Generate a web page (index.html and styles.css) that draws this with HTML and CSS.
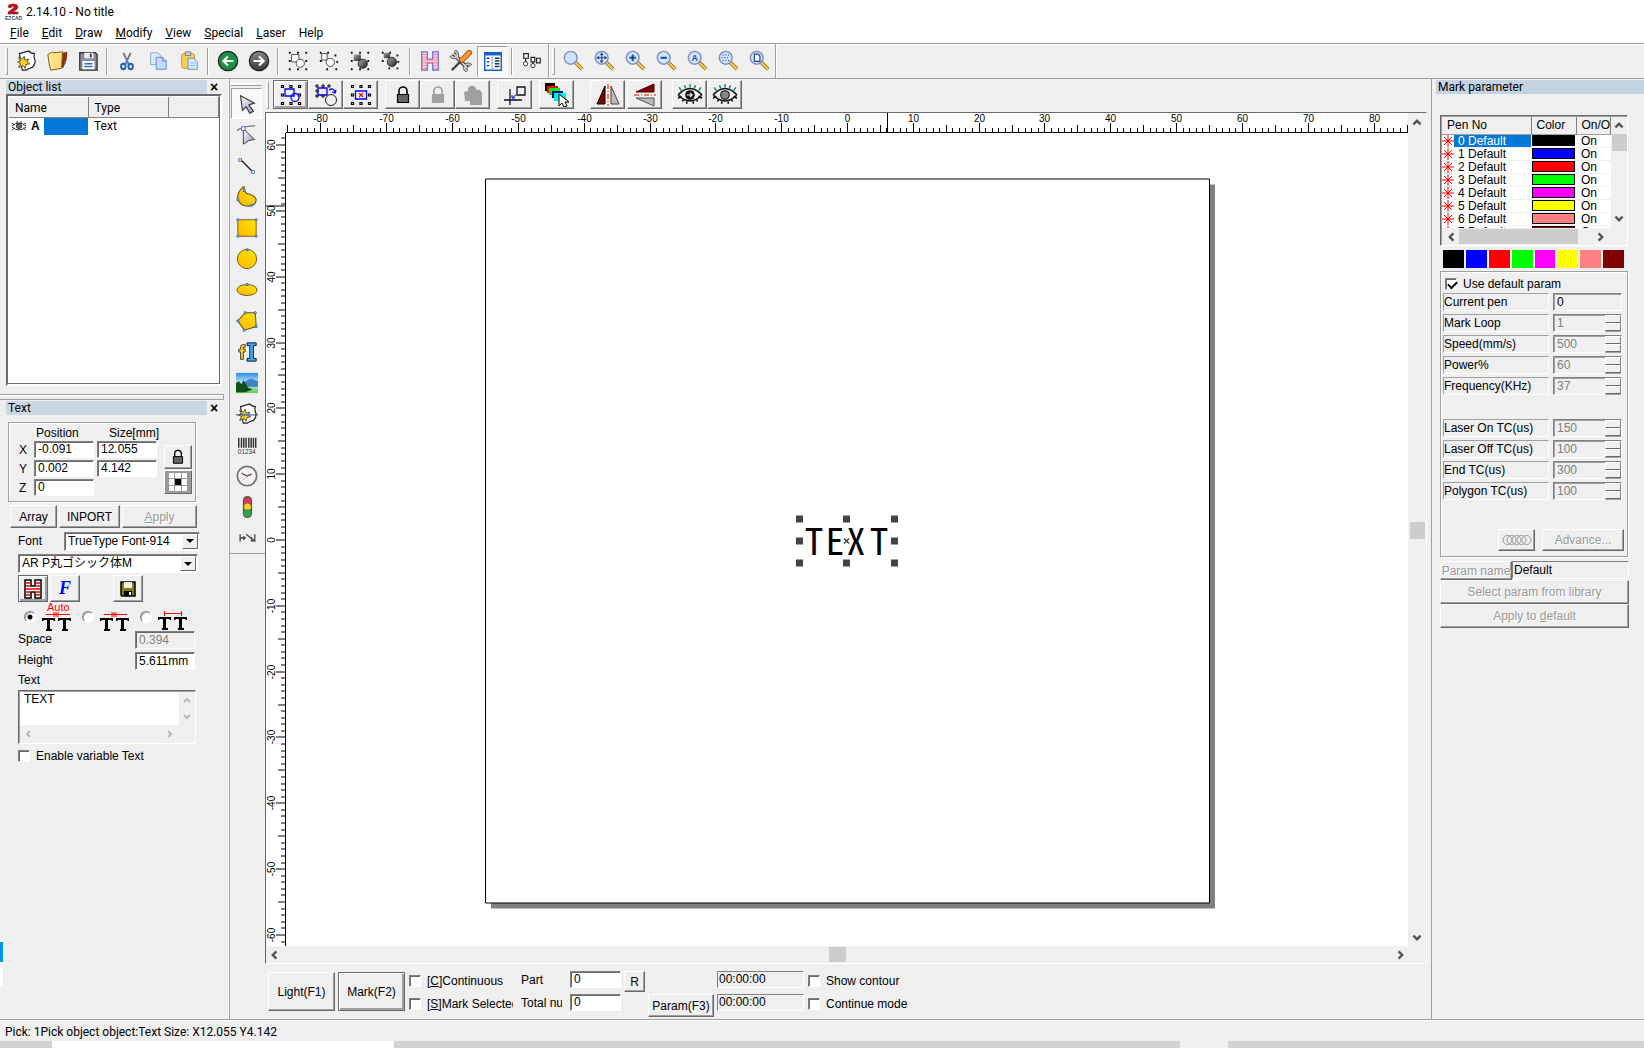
FILE: index.html
```html
<!DOCTYPE html>
<html lang="en">
<head>
<meta charset="utf-8">
<title>2.14.10 - No title</title>
<link rel="stylesheet" href="styles.css">
</head>
<body>
<svg class="defs" aria-hidden="true">
  <defs>
    <linearGradient id="gold" x1="0" y1="1" x2="1" y2="0"><stop offset="0" stop-color="#ffb400"/><stop offset="1" stop-color="#ffe600"/></linearGradient>
    <linearGradient id="steel" x1="0" y1="0" x2="1" y2="1"><stop offset="0" stop-color="#fff"/><stop offset="1" stop-color="#8c93b8"/></linearGradient>
    <linearGradient id="ball" x1="0" y1="0" x2="1" y2="1"><stop offset="0" stop-color="#aaa"/><stop offset="1" stop-color="#222"/></linearGradient>
    <linearGradient id="sky" x1="0" y1="0" x2="0" y2="1"><stop offset="0" stop-color="#2f8be8"/><stop offset=".5" stop-color="#bfe6fb"/><stop offset="1" stop-color="#6cc84a"/></linearGradient>
    <linearGradient id="disc" x1="0" y1="0" x2="0" y2="1"><stop offset="0" stop-color="#8a8a8a"/><stop offset="1" stop-color="#3a3a3a"/></linearGradient>
    <symbol id="page-star" viewBox="0 0 24 24"><path d="M5 4 15 1q2 3 6 3-1 4 1 8 0 4-3 7-4 1-7 3L8 22 6 12z" fill="#fff" stroke="#222" stroke-width="1.300"/><path d="M4 8l4 2 2-3 1 4 4-1-2 3 3 2-4 1-1 4-2-3-5 2 2-4-3-2 3-1z" fill="#ffd21a" stroke="#222" stroke-width=".8"/></symbol>
    <symbol id="dots" viewBox="0 0 24 24"><path d="M2 2h2v2H2zM11 2h2v2h-2zM20 2h2v2h-2zM2 11h2v2H2zM20 11h2v2h-2zM2 20h2v2H2zM11 20h2v2h-2zM20 20h2v2h-2z" fill="#111"/></symbol>
    <symbol id="hdots" viewBox="0 0 24 24"><path d="M2.500 2.500h2v2h-2zM11 2.500h2v2h-2zM19.500 2.500h2v2h-2zM2.500 11h2v2h-2zM19.500 11h2v2h-2zM2.500 19.500h2v2h-2zM11 19.500h2v2h-2zM19.500 19.500h2v2h-2z" fill="#fff" stroke="#000" stroke-width="1.200"/></symbol>
    <symbol id="lens" viewBox="0 0 24 24"><path d="M14 13l8 8" stroke="#8a6d1a" stroke-width="4"/><path d="M14 13l8 8" stroke="#f3cf55" stroke-width="2.200"/><circle cx="9.500" cy="8.500" r="7" fill="#cfe3fa" stroke="#7d8fc4" stroke-width="1.600"/></symbol>
    <symbol id="lock" viewBox="0 0 24 24"><path d="M8 11V8a4 4 0 0 1 8 0v3" fill="none" stroke="currentColor" stroke-width="1.600"/><path d="M6.500 11.500h11v8h-11z" fill="var(--body, #666)" stroke="currentColor" stroke-width="1.200"/></symbol>
    <symbol id="eye" viewBox="0 0 24 24"><path d="M1 12Q12 0 23 12M1 12q11 11 22 0M1 15l3-2M23 15l-3-2M5 18l1-2M9 20v-2M15 20v-2M19 18l-1-2" fill="none" stroke="#111" stroke-width="1.500"/><path d="M4 8 2 5M8 6 7 3M12 5V2M16 6l1-3M20 8l2-3" stroke="#20807a" stroke-width="1.400"/><circle cx="12" cy="12" r="4.500" fill="#111"/></symbol>
    <symbol id="up" viewBox="0 0 10 10"><path d="M2 7l3-3 3 3" fill="none" stroke="currentColor" stroke-width="2"/></symbol>
    <symbol id="down" viewBox="0 0 10 10"><path d="M2 3l3 3 3-3" fill="none" stroke="currentColor" stroke-width="2"/></symbol>
    <symbol id="left" viewBox="0 0 10 10"><path d="M7 2 4 5l3 3" fill="none" stroke="currentColor" stroke-width="2"/></symbol>
    <symbol id="right" viewBox="0 0 10 10"><path d="M3 2l3 3-3 3" fill="none" stroke="currentColor" stroke-width="2"/></symbol>
    <symbol id="drop" viewBox="0 0 10 10"><path d="M1 3h8L5 7z" fill="#000"/></symbol>
    <symbol id="burst" viewBox="0 0 12 12"><path d="M6 0v12M0 6h12M2 2l8 8M10 2l-8 8" stroke="#f00" stroke-width="1"/></symbol>
    <symbol id="tt" viewBox="0 0 30 16"><path d="M0 3h13v3h-1l-1-1H8v9h2v2H4v-2h1V5H2L1 6H0zM16 3h13v3h-1l-1-1h-3v9h2v2h-6v-2h1V5h-3l-1 1h-1z" fill="#000"/></symbol>
  </defs>
</svg>
<div class="app">
  <header class="titlebar">
    <svg class="logo" viewBox="0 0 18 18"><path d="M4 4q0-3 5-3 5 0 5 3 0 2-5 5h5v2H4V9q6-4 6-5 0-1-1-1t-2 2z" fill="#c1121f" stroke="#611"  stroke-width=".5"/><text x="1" y="17" class="logo-text">EZCAD</text></svg>
    <span>2.14.10 - No title</span>
  </header>
  <nav class="menubar">
    <a href="#"><u>F</u>ile</a><a href="#"><u>E</u>dit</a><a href="#"><u>D</u>raw</a><a href="#"><u>M</u>odify</a><a href="#"><u>V</u>iew</a><a href="#"><u>S</u>pecial</a><a href="#"><u>L</u>aser</a><a href="#">Help</a>
  </nav>

  <div class="toolbar">
    <span class="grip"></span>
    <button class="tool" aria-label="New"><svg><use href="#page-star"/></svg></button>
    <button class="tool" aria-label="Open"><svg viewBox="0 0 24 24"><path d="M13 4l10-2q1 8-4 17l-7 2z" fill="#8d2f12"/><path d="M2 5l5-3 1 1 10-1-1 18-12 2Q3 14 2 5z" fill="#ffdf80" stroke="#7a5310"/><path d="M6 4l-2 1 2 14" fill="none" stroke="#fff5c8"/></svg></button>
    <button class="tool" aria-label="Save"><svg viewBox="0 0 24 24"><path d="M3 3h17l2 2v17H3z" fill="#8c8c94" stroke="#333" stroke-width="1.400"/><path d="M8 3h10v6H8z" fill="#eef"/><path d="M14 4h2v4h-2z" fill="#333"/><path d="M6 12h13v9H6z" fill="#fff"/><path d="M8 15h9M8 18h9" stroke="#2a70d0" stroke-width="1.500"/></svg></button>
    <span class="sep"></span>
    <button class="tool" aria-label="Cut"><svg viewBox="0 0 24 24"><path d="M8 3l6 13M16 3l-6 13" stroke="#6a7c96" stroke-width="2"/><ellipse cx="8" cy="18" rx="2.500" ry="3" fill="none" stroke="#1c5fb0" stroke-width="2"/><ellipse cx="16" cy="18" rx="2.500" ry="3" fill="none" stroke="#1c5fb0" stroke-width="2"/></svg></button>
    <button class="tool" aria-label="Copy"><svg viewBox="0 0 24 24"><path d="M4 3h8l3 3v10H4z" fill="#dceafc" stroke="#7da0dc"/><path d="M10 8h7l4 4v9H10z" fill="#c5dafa" stroke="#5f87cf"/><path d="M17 8v4h4" fill="none" stroke="#5f87cf"/></svg></button>
    <button class="tool" aria-label="Paste"><svg viewBox="0 0 24 24"><rect x="4" y="4" width="14" height="16" rx="2" fill="#f8cf52" stroke="#c79a20"/><path d="M8 2h6v4H8z" fill="#c8ccd4" stroke="#777"/><path d="M11 9h6l4 4v8H11z" fill="#dceafc" stroke="#5f87cf"/><path d="M13 14h6M13 17h6" stroke="#8fb0e6"/></svg></button>
    <span class="sep"></span>
    <button class="tool" aria-label="Undo"><svg viewBox="0 0 24 24"><circle cx="12" cy="12" r="10.500" fill="#1d8f43" stroke="#222" stroke-width="1.400"/><path d="M18 12H8M12 7l-5 5 5 5" fill="none" stroke="#fff" stroke-width="2.400"/></svg></button>
    <button class="tool" aria-label="Redo"><svg viewBox="0 0 24 24"><circle cx="12" cy="12" r="10.500" fill="url(#disc)" stroke="#222" stroke-width="1.400"/><path d="M6 12h10M12 7l5 5-5 5" fill="none" stroke="#fff" stroke-width="2.400"/></svg></button>
    <span class="sep"></span>
    <button class="tool" aria-label="Combine"><svg viewBox="0 0 24 24"><use href="#dots"/><path d="M5 5h8v8H5z" fill="#fff" stroke="#444"/><circle cx="14.500" cy="14.500" r="4.500" fill="#fff" stroke="#444"/></svg></button>
    <button class="tool" aria-label="Uncombine"><svg viewBox="0 0 24 24"><path d="M2 2h2v2H2zM10 2h2v2h-2zM2 11h2v2H2zM18 5h2v2h-2zM9 20h2v2H9zM19 20h2v2h-2zM20 12h2v2h-2z" fill="#111"/><path d="M4 4h6v7H4z" fill="#fff" stroke="#444"/><circle cx="13.500" cy="13.500" r="4.500" fill="#fff" stroke="#444"/></svg></button>
    <button class="tool" aria-label="Group"><svg viewBox="0 0 24 24"><use href="#dots"/><rect x="5" y="5" width="8" height="7" rx="1" fill="url(#ball)"/><circle cx="15" cy="15" r="5" fill="url(#ball)" stroke="#222"/></svg></button>
    <button class="tool" aria-label="Ungroup"><svg viewBox="0 0 24 24"><path d="M2 2h2v2H2zM10 2h2v2h-2zM2 11h2v2H2zM18 5h2v2h-2zM9 19h2v2H9zM18 19h2v2h-2zM19 12h2v2h-2z" fill="#111"/><rect x="4" y="3" width="7" height="6" rx="1" fill="url(#ball)"/><circle cx="13" cy="13" r="5" fill="url(#ball)" stroke="#222"/></svg></button>
    <span class="sep"></span>
    <button class="tool" aria-label="Hatch"><svg viewBox="0 0 24 24"><path d="M3 2h6v8h6V2h6v20h-6v-8H9v8H3z" fill="#ffd4d4" stroke="#6a6ae0" stroke-width="1.400"/><path d="M4 5h4M4 8h4M4 11h16M4 14h16M4 17h4M4 20h4M16 5h4M16 8h4M16 17h4M16 20h4" stroke="#f08080"/></svg></button>
    <button class="tool" aria-label="Options"><svg viewBox="0 0 24 24"><path d="M4 4l15 16" stroke="#444" stroke-width="4.500"/><path d="M1 6q3 4 7 1 1-4-3-6M23 17q-3-3-7 0-1 4 3 6" fill="none" stroke="#444" stroke-width="3.500"/><path d="M4 4l15 16M1 6q3 4 7 1 1-4-3-6M23 17q-3-3-7 0-1 4 3 6" fill="none" stroke="#ccc" stroke-width="1.800"/><path d="M2 22l11-11" stroke="#444" stroke-width="2.500"/><path d="M13 11l8-8" stroke="#a84a10" stroke-width="6" stroke-linecap="round"/><path d="M13 11l8-8" stroke="#ff9a30" stroke-width="4" stroke-linecap="round"/></svg></button>
    <button class="tool active" aria-label="Object list"><svg viewBox="0 0 24 24"><path d="M3 3h18v19H3z" fill="#fff" stroke="#1464c8" stroke-width="1.600"/><path d="M3 3h18v3H3z" fill="#1464c8"/><path d="M5 9h3M5 13h3M5 17h3M14 9h5M14 12h5M14 15h5M14 18h5" stroke="#234" stroke-width="1.500"/><path d="M11 7v14" stroke="#1464c8" stroke-dasharray="2 1"/></svg></button>
    <span class="sep"></span>
    <button class="tool" aria-label="Sort"><svg viewBox="0 0 24 24"><path d="M3 4h5v5H3zM11 8h4v5h-4zM17 9h4v5h-4zM5 9v4M13 13v3" fill="#fff" stroke="#222" stroke-width="1.300"/><circle cx="5" cy="15" r="2.300" fill="#fff" stroke="#222"/><circle cx="13" cy="17" r="2.300" fill="#fff" stroke="#222"/></svg></button>
    <span class="sep end"></span>
    <span class="grip second"></span>
    <button class="tool" aria-label="Zoom window"><svg><use href="#lens"/></svg></button>
    <button class="tool" aria-label="Pan"><svg viewBox="0 0 24 24"><use href="#lens"/><path d="M9.500 4v9M5 8.500h9M8 5.500l1.500-2 1.500 2M8 11.500l1.500 2 1.500-2M6.500 7l-2 1.500 2 1.500M12.500 7l2 1.500-2 1.500" fill="none" stroke="#25488c" stroke-width="1.200"/></svg></button>
    <button class="tool" aria-label="Zoom in"><svg viewBox="0 0 24 24"><use href="#lens"/><path d="M9.500 5v7M6 8.500h7" stroke="#25488c" stroke-width="2.200"/></svg></button>
    <button class="tool" aria-label="Zoom out"><svg viewBox="0 0 24 24"><use href="#lens"/><path d="M6 8.500h7" stroke="#25488c" stroke-width="2.200"/></svg></button>
    <button class="tool" aria-label="Zoom all"><svg viewBox="0 0 24 24"><use href="#lens"/><text x="9.500" y="12" class="lens-a">A</text></svg></button>
    <button class="tool" aria-label="Zoom selection"><svg viewBox="0 0 24 24"><use href="#lens"/><path d="M6 5.500h8M5 8.500h9M6 11.500h8" stroke="#25488c" stroke-width="1.200" stroke-dasharray="1.200 1.800"/></svg></button>
    <button class="tool" aria-label="Zoom page"><svg viewBox="0 0 24 24"><use href="#lens"/><path d="M7 4.500h4l2 2v6H7z" fill="#fff" stroke="#25488c" stroke-width="1.400"/></svg></button>
    <span class="sep end"></span>
  </div>

  <main class="workspace">
    <aside class="dock-left">
      <section>
        <div class="panel-head"><h2>Object list</h2><button class="close" aria-label="Close object list">×</button></div>
        <div class="tree">
          <table>
            <colgroup><col class="c-name"><col class="c-type"><col></colgroup>
            <thead><tr><th>Name</th><th>Type</th><th></th></tr></thead>
            <tbody><tr><td class="name-cell"><div class="name-row"><svg class="mini-eye" viewBox="0 0 16 12"><path d="M1 6Q8 0 15 6M1 7q7 6 14 0M1 3l3 2M15 3l-3 2M1 10l3-2M15 10l-3-2M6 1v2M10 1v2" fill="none" stroke="#333"/><circle cx="8" cy="6" r="2.500" fill="#777" stroke="#222"/></svg><b>A</b><span class="picked"></span></div></td><td>Text</td><td></td></tr></tbody>
          </table>
        </div>
      </section>
      <div class="splitter"></div>
      <section>
        <div class="panel-head"><h2>Text</h2><button class="close" aria-label="Close text panel">×</button></div>
        <form class="text-form">
          <div class="group">
            <div class="coords">
              <span></span><span class="head-pos">Position</span><span class="head-size">Size[mm]</span>
              <label for="px">X</label><input id="px" class="field" value="-0.091"><input aria-label="Width" class="field" value="12.055">
              <label for="py">Y</label><input id="py" class="field" value="0.002"><input aria-label="Height" class="field" value="4.142">
              <label for="pz">Z</label><input id="pz" class="field" value="0">
            </div>
            <div class="side">
              <button type="button" class="btn" aria-label="Lock ratio"><svg class="i20"><use href="#lock"/></svg></button>
              <button type="button" class="btn anchor" aria-label="Anchor"><svg viewBox="0 0 20 18" class="i20"><path d="M0 0h20v18H0z" fill="#999"/><path d="M1 0h5v5H1zM7 0h6v5H7zM14 0h5v5h-5zM1 6h5v6H1zM14 6h5v6h-5zM1 13h5v5H1zM7 13h6v5H7zM14 13h5v5h-5z" fill="#fff"/><path d="M7 6h6v6H7z"/></svg></button>
            </div>
          </div>
          <div class="actions"><button type="button" class="btn w-array">Array</button><button type="button" class="btn w-inport">INPORT</button><button type="button" class="btn w-apply" disabled><u>A</u>pply</button></div>
          <div class="font-row"><label for="ft">Font</label><span class="combo"><select id="ft"><option>TrueType Font-914</option></select><span class="arrow"><svg class="i10"><use href="#drop"/></svg></span></span></div>
          <span class="combo face"><select aria-label="Typeface"><option>AR P丸ゴシック体M</option></select><span class="arrow"><svg class="i10"><use href="#drop"/></svg></span></span>
          <div class="style-row">
            <button type="button" class="btn pressed" aria-label="Hatch"><svg class="i20" viewBox="0 0 20 20"><path d="M2 1h6v6h4V1h6v18h-6v-6H8v6H2z" fill="#fff" stroke="#000" stroke-width="1.500"/><path d="M3 4h4M3 7h4M3 10h14M3 13h4M3 16h4M13 4h4M13 7h4M13 13h4M13 16h4" stroke="#e00" stroke-width="1.500"/></svg></button>
            <button type="button" class="btn italic-f">F</button>
            <button type="button" class="btn keep" aria-label="Save font"><svg class="i20" viewBox="0 0 20 20"><path d="M3 3h14v14H4l-1-1z" fill="#808000" stroke="#000" stroke-width="1.500"/><path d="M6 3h8v6H6z" fill="#eee"/><path d="M6 12h8v5H6z"/><path d="M11 13h2v3h-2z" fill="#fff"/></svg></button>
          </div>
          <div class="spacing">
            <label><input type="radio" name="sp" checked aria-label="Automatic spacing"><svg viewBox="0 0 30 28"><text x="5" y="8" class="auto">Auto</text><path d="M4 11.500h24M12 9v5M16 9v5M14 9v5" stroke="#f00"/><use href="#tt" y="12" width="30" height="16"/></svg></label>
            <label><input type="radio" name="sp" aria-label="Edge spacing"><svg viewBox="0 0 30 28"><path d="M4 11.500h23M12 9v5M16 9v5M14 9v5" stroke="#f00"/><use href="#tt" y="12" width="30" height="16"/></svg></label>
            <label><input type="radio" name="sp" aria-label="Centre spacing"><svg viewBox="0 0 30 28"><path d="M6 10.500h17M6.500 8v5M23.500 8v5" stroke="#f00"/><use href="#tt" y="11" width="30" height="16"/></svg></label>
          </div>
          <div class="pair"><label for="space">Space</label><input id="space" class="field" value="0.394" disabled></div>
          <div class="pair"><label for="hgt">Height</label><input id="hgt" class="field" value="5.611mm"></div>
          <label class="text-label" for="body">Text</label>
          <div class="memo">
            <textarea id="body">TEXT</textarea>
            <span class="memo-v"><svg class="i10"><use href="#up"/></svg><svg class="i10"><use href="#down"/></svg></span>
            <span class="memo-h"><svg class="i10"><use href="#left"/></svg><svg class="i10"><use href="#right"/></svg></span>
          </div>
          <label class="check"><input type="checkbox">Enable variable Text</label>
        </form>
      </section>
      <span class="edge-tab"></span>
    </aside>

    <div class="palette-col">
      <div class="draw-tools">
        <span class="hgrip"></span>
        <button class="tool active" aria-label="Pick"><svg viewBox="0 0 24 24"><path d="M5 3l15 8-6 2 5 7-4 2-4-7-4 4z" fill="url(#steel)" stroke="#333" stroke-width="1.200"/></svg></button>
        <button class="tool" aria-label="Edit node"><svg viewBox="0 0 24 24"><path d="M1 7Q8 2 21 2" fill="none" stroke="#777" stroke-width="1.500"/><path d="M8 5l12 12-6 1-6 4z" fill="url(#steel)" stroke="#333"/><path d="M6 3h4v4H6z" fill="#fff" stroke="#36c"/></svg></button>
        <button class="tool" aria-label="Line"><svg viewBox="0 0 24 24"><path d="M5 5l14 14" stroke="#222" stroke-width="1.500"/><path d="M3 4h3v3H3zM17 17h3v3h-3z" fill="#fff" stroke="#36c"/></svg></button>
        <button class="tool" aria-label="Curve"><svg viewBox="0 0 24 24"><path d="M8 1Q1 7 2 14q2 8 12 8 8-1 8-7-1-4-7-6Q8 8 9 1z" fill="url(#gold)" stroke="#6b5320" stroke-width="1.300"/><path d="M8 4h2v2H8zM1 14h2v2H1zM16 20h2v2h-2z" fill="#fff" stroke="#16b"/></svg></button>
        <button class="tool" aria-label="Rectangle"><svg viewBox="0 0 24 24"><path d="M2 3h20v18H2z" fill="url(#gold)" stroke="#6b5320"/><path d="M1 2h2v2H1zM21 2h2v2h-2zM1 20h2v2H1zM21 20h2v2h-2z" fill="#fff" stroke="#36c"/></svg></button>
        <button class="tool" aria-label="Circle"><svg viewBox="0 0 24 24"><circle cx="12" cy="12" r="10.500" fill="url(#gold)" stroke="#6b5320"/><path d="M11 1h2v2h-2z" fill="#fff" stroke="#16b"/></svg></button>
        <button class="tool" aria-label="Ellipse"><svg viewBox="0 0 24 24"><ellipse cx="12" cy="12" rx="11" ry="6" fill="url(#gold)" stroke="#6b5320"/><path d="M11 5h2v2h-2z" fill="#fff" stroke="#16b"/></svg></button>
        <button class="tool" aria-label="Polygon"><svg viewBox="0 0 24 24"><path d="M2 12l8-9h11l1 15-13 4z" fill="url(#gold)" stroke="#6b5320" stroke-width="1.200"/><path d="M1 11h2v2H1zM9 2h2v2H9zM20 2h2v2h-2zM21 17h2v2h-2zM8 21h2v2H8z" fill="#fff" stroke="#16b"/></svg></button>
        <button class="tool" aria-label="Text"><svg viewBox="0 0 24 24"><path d="M9 4H7Q5 4 5 7v2H3v3h2v8h3v-8h2V9H8V7h2V4z" fill="#ffd21a" stroke="#333"/><path d="M12 2h10v3h-3v14h3v3H12v-3h3V5h-3z" fill="#3fa8f0" stroke="#113"/></svg></button>
        <button class="tool" aria-label="Bitmap"><svg viewBox="0 0 24 24"><path d="M0 1h24v22H0z" fill="url(#sky)"/><path d="M9 11l7-4 8 3v6H9z" fill="#3f83c4"/><path d="M0 12l3-2 3 3 2-4 3 4 2 4 5 2-8 3H0z" fill="#134f1c"/></svg></button>
        <button class="tool" aria-label="Vector"><svg viewBox="0 0 24 24"><use href="#page-star"/><path d="M0 13h24" stroke="#334"/><path d="M7 12h2v2H7zM13 12h2v2h-2z" fill="#fff" stroke="#16c"/></svg></button>
        <button class="tool" aria-label="Barcode"><svg viewBox="0 0 24 24"><path d="M3 4v11M6 4v11M8.500 4v11M11 4v11M14 4v11M16.500 4v11M19 4v11M21.500 4v11" stroke="#333" stroke-width="1.600"/><text x="2" y="22" class="code">01234</text></svg></button>
        <button class="tool" aria-label="Delay"><svg viewBox="0 0 24 24"><circle cx="12" cy="12" r="10.500" fill="#f4f4f4" stroke="#777" stroke-width="2"/><path d="M6 9l6 3 5-2" fill="none" stroke="#444" stroke-width="1.300"/><path d="M12 12l-5 5" stroke="#f88"/></svg></button>
        <button class="tool" aria-label="Output"><svg viewBox="0 0 24 24"><rect x="7.500" y="0" width="10" height="24" rx="5" fill="#555"/><circle cx="12.500" cy="5.500" r="4" fill="#d63a50"/><circle cx="12.500" cy="12" r="3.800" fill="#f5d020"/><circle cx="12.500" cy="18.500" r="4" fill="#2fa34a"/></svg></button>
        <button class="tool" aria-label="Extend axis"><svg viewBox="0 0 24 24"><path d="M4.500 8v8M5 12h5M8 10l2 2-2 2M11 8l9 7M20.500 8v8M16 15h4M17 11v3" fill="none" stroke="#444" stroke-width="1.400"/></svg></button>
      </div>
    </div>

    <div class="center">
      <div class="subbar">
        <span class="grip"></span>
        <button class="btn sq pressed" aria-label="Select"><svg viewBox="0 0 24 24"><use href="#hdots"/><path d="M6 6h9v7H6z" fill="none" stroke="#00f" stroke-width="1.300"/><circle cx="16" cy="14.500" r="4" fill="none" stroke="#00f" stroke-width="1.300"/></svg></button><button class="btn sq" aria-label="Rotate"><svg viewBox="0 0 24 24"><path d="M4 5h9v7H4z" fill="none" stroke="#00f" stroke-width="1.300"/><path d="M2 2h2v2H2zM8 2h2v2H8zM14 2h2v2h-2zM2 7h2v2H2zM2 12h2v2H2zM8 12h2v2H8z" fill="#fff" stroke="#000"/><path d="M15 7q5-3 6 3M22 7l-1 3-3-1" fill="none" stroke="#00f" stroke-width="1.300"/><circle cx="17" cy="17" r="5.500" fill="none" stroke="#222"/></svg></button><button class="btn sq gap" aria-label="Scale"><svg viewBox="0 0 24 24"><use href="#hdots"/><path d="M6.500 8h11v8h-11z" fill="#fff" stroke="#00f" stroke-width="1.300"/><path d="M10 10l4 4M14 10l-4 4" stroke="#f00" stroke-width="1.300"/></svg></button>
        <button class="btn sq" aria-label="Lock"><svg><use href="#lock"/></svg></button><button class="btn sq grey" aria-label="Unlock"><svg><use href="#lock"/></svg></button><button class="btn sq grey gap" aria-label="Unlock all"><svg viewBox="0 0 24 24"><path d="M3 9l4-1V5q4-5 8 0v2q4-2 6 3v12H9v-4H4z" fill="currentColor"/></svg></button>
        <button class="btn sq gap" aria-label="Put to origin"><svg viewBox="0 0 24 24"><path d="M1 17h18M7 6v16M14 4h8v8h-8z" fill="none" stroke="#111" stroke-width="1.300"/><path d="M13 12l-4 3M9 12v3h3" fill="none" stroke="#00f"/></svg></button>
        <button class="btn sq gap2" aria-label="Mark order"><svg viewBox="0 0 24 24"><path d="M0 0h10v8H0z"/><path d="M2 3h11v7H2z" fill="#f00"/><path d="M4 5h11v7H4z" fill="#0e0"/><path d="M7 8h11v7H7z" fill="#008"/><path d="M9 10h12v8H9z" fill="#0ee"/><path d="M14 11v12l3-3 2 4 3-1-2-4h4z" fill="#fff" stroke="#000"/></svg></button>
        <button class="btn sq tight" aria-label="Mirror horizontally"><svg viewBox="0 0 24 24"><path d="M9 3v18H1z" fill="#800000" stroke="#000"/><path d="M15 3v18h8z" fill="#bbb" stroke="#444"/><path d="M12 1v22" stroke="#f00" stroke-dasharray="5 2 1 2"/></svg></button><button class="btn sq gap3" aria-label="Mirror vertically"><svg viewBox="0 0 24 24"><path d="M21 1v8H3z" fill="#800000" stroke="#400"/><path d="M21 23v-8H3z" fill="#bbb" stroke="#555"/><path d="M1 12h22" stroke="#f00" stroke-dasharray="5 2 1 2"/></svg></button>
        <button class="btn sq wide-eye" aria-label="Show"><svg viewBox="0 0 24 24"><use href="#eye"/><path d="M9 12h5M12 10l2 2-2 2" fill="none" stroke="#fff"/></svg></button><button class="btn sq wide-eye" aria-label="Hide"><svg viewBox="0 0 24 24"><use href="#eye"/><circle cx="12" cy="12" r="3.500" fill="#888"/></svg></button>
      </div>
      <div class="view">
        <svg class="ruler-h" aria-label="Horizontal ruler"><line x1="0" x2="100%" y1="19.500" y2="19.500" stroke="#000"/><svg id="ticks-h" x="50%" overflow="visible"></svg></svg>
        <svg class="ruler-v" aria-label="Vertical ruler"><line y1="0" y2="100%" x1="19.500" x2="19.500" stroke="#000"/><svg id="ticks-v" y="50%" overflow="visible"></svg></svg>
        <svg class="stage" aria-label="Work area"><svg x="50%" y="50%" overflow="visible">
          <path d="M-356-355H368V369H-356z" fill="#808080"/>
          <path d="M-361.500-360.500H362.500V363.500H-361.500z" fill="#fff" stroke="#000"/>
          <text x="-33 -12 9 32" y="15" class="mark-text">TEXT</text>
          <path d="M-51-24h7v7h-7zM-4-24h7v7h-7zM44-24h7v7h-7zM-51-2h7v7h-7zM44-2h7v7h-7zM-51 20h7v7h-7zM-4 20h7v7h-7zM44 20h7v7h-7z" fill="#444"/>
          <path d="M-3-1l5 5M2-1l-5 5" stroke="#444" stroke-width="1.500"/>
        </svg></svg>
        <div class="scroll-v"><svg class="i16"><use href="#up"/></svg><i></i><svg class="i16"><use href="#down"/></svg></div>
        <div class="scroll-h"><svg class="i16"><use href="#left"/></svg><i></i><svg class="i16"><use href="#right"/></svg></div>
      </div>
      <form class="markbar">
        <button type="button" class="btn big">Light(F1)</button>
        <button type="button" class="btn big pressed">Mark(F2)</button>
        <label class="check"><input type="checkbox"><span>[<u>C</u>]Continuous</span></label>
        <label class="clip" for="part"><span>Part</span></label>
        <input id="part" class="field" value="0">
        <button type="button" class="btn r">R</button>
        <span></span>
        <input class="field flat" aria-label="Elapsed" value="00:00:00" readonly>
        <label class="check"><input type="checkbox">Show contour</label>
        <label class="check"><input type="checkbox"><span>[<u>S</u>]Mark Selected</span></label>
        <label class="clip" for="total"><span>Total num</span></label>
        <input id="total" class="field" value="0">
        <span></span>
        <button type="button" class="btn param">Param(F3)</button>
        <input class="field flat" aria-label="Total time" value="00:00:00" readonly>
        <label class="check"><input type="checkbox">Continue mode</label>
      </form>
    </div>

    <aside class="dock-right">
      <h2>Mark parameter</h2>
      <div class="pens">
        <div class="pen-view">
          <table>
            <colgroup><col class="p-no"><col class="p-color"><col></colgroup>
            <thead><tr><th>Pen No</th><th>Color</th><th>On/O</th></tr></thead>
            <tbody>
              <tr class="sel"><td><div><svg><use href="#burst"/></svg><span>0 Default</span></div></td><td><i class="k0"></i></td><td>On</td></tr>
              <tr><td><div><svg><use href="#burst"/></svg><span>1 Default</span></div></td><td><i class="k1"></i></td><td>On</td></tr>
              <tr><td><div><svg><use href="#burst"/></svg><span>2 Default</span></div></td><td><i class="k2"></i></td><td>On</td></tr>
              <tr><td><div><svg><use href="#burst"/></svg><span>3 Default</span></div></td><td><i class="k3"></i></td><td>On</td></tr>
              <tr><td><div><svg><use href="#burst"/></svg><span>4 Default</span></div></td><td><i class="k4"></i></td><td>On</td></tr>
              <tr><td><div><svg><use href="#burst"/></svg><span>5 Default</span></div></td><td><i class="k5"></i></td><td>On</td></tr>
              <tr><td><div><svg><use href="#burst"/></svg><span>6 Default</span></div></td><td><i class="k6"></i></td><td>On</td></tr>
              <tr><td><div><svg><use href="#burst"/></svg><span>7 Default</span></div></td><td><i class="k7"></i></td><td>On</td></tr>
            </tbody>
          </table>
        </div>
        <div class="pen-v"><svg class="i16"><use href="#up"/></svg><i></i><svg class="i16"><use href="#down"/></svg></div>
        <div class="pen-h"><svg class="i16"><use href="#left"/></svg><i></i><svg class="i16"><use href="#right"/></svg></div>
      </div>
      <div class="swatches"><i class="k0"></i><i class="k1"></i><i class="k2"></i><i class="k3"></i><i class="k4"></i><i class="k5"></i><i class="k6"></i><i class="k7"></i></div>
      <form class="params">
        <label class="check"><input type="checkbox" checked>Use default param</label>
        <div class="prow"><label for="p0">Current pen</label><span class="spin live"><input id="p0" value="0" readonly></span></div>
        <div class="prow"><label for="p1">Mark Loop</label><span class="spin"><input id="p1" value="1" disabled><span class="ud"><button type="button" disabled></button><button type="button" disabled></button></span></span></div>
        <div class="prow"><label for="p2">Speed(mm/s)</label><span class="spin"><input id="p2" value="500" disabled><span class="ud"><button type="button" disabled></button><button type="button" disabled></button></span></span></div>
        <div class="prow"><label for="p3">Power%</label><span class="spin"><input id="p3" value="60" disabled><span class="ud"><button type="button" disabled></button><button type="button" disabled></button></span></span></div>
        <div class="prow"><label for="p4">Frequency(KHz)</label><span class="spin"><input id="p4" value="37" disabled><span class="ud"><button type="button" disabled></button><button type="button" disabled></button></span></span></div>
        <div class="prow split"><label for="p5">Laser On TC(us)</label><span class="spin"><input id="p5" value="150" disabled><span class="ud"><button type="button" disabled></button><button type="button" disabled></button></span></span></div>
        <div class="prow"><label for="p6">Laser Off TC(us)</label><span class="spin"><input id="p6" value="100" disabled><span class="ud"><button type="button" disabled></button><button type="button" disabled></button></span></span></div>
        <div class="prow"><label for="p7">End TC(us)</label><span class="spin"><input id="p7" value="300" disabled><span class="ud"><button type="button" disabled></button><button type="button" disabled></button></span></span></div>
        <div class="prow"><label for="p8">Polygon TC(us)</label><span class="spin"><input id="p8" value="100" disabled><span class="ud"><button type="button" disabled></button><button type="button" disabled></button></span></span></div>
        <div class="adv"><button type="button" class="btn" disabled aria-label="Wobble"><svg viewBox="0 0 30 12"><g fill="none" stroke="#999"><circle cx="5.500" cy="6" r="4.500"/><circle cx="9.500" cy="6" r="4.500"/><circle cx="14.500" cy="6" r="4.500"/><circle cx="19.500" cy="6" r="4.500"/><circle cx="24.500" cy="6" r="4.500"/></g></svg></button><button type="button" class="btn" disabled>Advance...</button></div>
      </form>
      <div class="pname"><button type="button" class="btn" disabled>Param name</button><input class="field flat" aria-label="Param name" value="Default"></div>
      <button class="btn lib" disabled>Select param from library</button>
      <button class="btn lib" disabled><span>Apply to <u>d</u>efault</span></button>
    </aside>
  </main>
  <footer class="status">Pick: 1Pick object object:Text Size: X12.055 Y4.142</footer>
  <div class="taskstrip"><span class="task-a"></span><span class="task-b"></span></div>
</div>
<script src="rulers.js"></script>
</body>
</html>
```
FILE: rulers.js
```js
const NS = 'http://www.w3.org/2000/svg';
const MM = 6.583;

function tickLength(mm) {
  if (mm % 10 === 0) return 10;
  return mm % 5 === 0 ? 8 : 5;
}

function drawRuler(id, range, vertical, cursor) {
  const host = document.getElementById(id);
  let d = '';
  for (let mm = -range; mm <= range; mm++) {
    const p = Math.round(mm * MM) + 0.5;
    const len = tickLength(mm);
    d += vertical ? `M${20 - len} ${p}H20` : `M${p} ${20 - len}V20`;
    if (mm % 10 === 0) {
      const t = document.createElementNS(NS, 'text');
      t.textContent = vertical ? -mm : mm;
      t.setAttribute('class', 'ruler-label');
      t.setAttribute('transform', vertical ? `translate(9 ${p}) rotate(-90)` : `translate(${p} 9)`);
      host.appendChild(t);
    }
  }
  d += vertical ? `M0 ${cursor}H20` : `M${cursor} 0V20`;
  const path = document.createElementNS(NS, 'path');
  path.setAttribute('d', d);
  path.setAttribute('stroke', '#000');
  host.appendChild(path);
}

drawRuler('ticks-h', 85, false, 40.5);
drawRuler('ticks-v', 61, true, -333.5);
```
FILE: styles.css
```css
* { box-sizing: border-box; }
body { margin: 0; background: #efefef; color: #000; font: 12px/16px "Liberation Sans", "Noto Sans CJK JP", sans-serif; }
button, input, select, textarea { font: inherit; color: inherit; margin: 0; padding: 0; border-radius: 0; }
h2 { margin: 0; font: 12px/14px Roboto, "Noto Sans", sans-serif; }
svg { display: block; flex: none; }
table { border-collapse: collapse; table-layout: fixed; width: 100%; }
th, td { font-weight: normal; text-align: left; padding: 0; }
.defs { position: absolute; width: 0; height: 0; }
.i10 { width: 10px; height: 10px; }
.i16 { width: 12px; height: 12px; color: #555; }
.i20 { width: 20px; height: 20px; }

.app { display: flex; flex-direction: column; min-height: 100vh; overflow: hidden; }
.titlebar, .menubar, .status { font-family: Roboto, "Noto Sans", sans-serif; }
.titlebar { display: flex; align-items: center; gap: 4px; height: 23px; padding-left: 4px; background: #fff; }
.logo { width: 18px; height: 18px; }
.logo-text { font: bold 5px "Liberation Sans", sans-serif; fill: #445; }
.menubar { display: flex; gap: 13px; height: 20px; padding-left: 10px; background: #fff; line-height: 20px; }
.menubar a { color: #000; text-decoration: none; }

.toolbar { display: flex; align-items: center; height: 36px; border-top: 1px solid #a0a0a0; border-bottom: 1px solid #a0a0a0; box-shadow: inset 0 1px #fff; }
.grip { width: 3px; height: 28px; border: 1px solid; border-color: #fff #a0a0a0 #a0a0a0 #fff; margin: 0 2px 0 5px; }
.grip.second { margin: 0 2px; }
.tool { display: flex; flex: none; align-items: center; justify-content: center; width: 31px; height: 31px; border: 1px solid transparent; background: none; }
.tool svg { width: 22px; height: 22px; }
.tool.active { background: #f8f8f8; border-color: #a0a0a0 #fff #fff #a0a0a0; }
.toolbar .active { margin-left: 1px; }
.sep { width: 2px; height: 27px; margin: 0 3px; border-left: 1px solid #a0a0a0; border-right: 1px solid #fff; }
.sep.end { height: 34px; margin: 0 0 0 1px; }
.lens-a { font: bold 9px "Liberation Sans", sans-serif; fill: #25488c; text-anchor: middle; }
.code { font: 7px "Liberation Sans", sans-serif; fill: #333; }

.workspace { display: flex; flex: 1; }
.dock-left { position: relative; flex: none; width: 229px; padding-top: 1px; border-right: 1px solid #fff; }
.panel-head { display: flex; align-items: center; width: 215px; margin-left: 6px; }
.panel-head h2 { width: 201px; padding-left: 2px; background: #cad8e6; }
.close { width: 14px; height: 14px; border: 0; background: none; font: bold 14px/14px "Liberation Sans", sans-serif; }
.tree { width: 216px; height: 292px; margin-left: 6px; padding: 1px; background: #fff; border: 2px solid; border-color: #696969 #fff #fff #696969; box-shadow: inset -1px -1px #696969; }
.c-name { width: 79px; }
.c-type { width: 80px; }
.tree table { font-family: Roboto, "Noto Sans", sans-serif; }
.tree th { height: 20px; padding: 3px 0 0 6px; line-height: 16px; background: #efefef; border-right: 1px solid #808080; border-bottom: 1px solid #808080; }
.tree td { height: 17px; line-height: 17px; padding-left: 6px; }
.tree td.name-cell { padding: 0; }
.name-row { display: flex; align-items: center; gap: 4px; padding-left: 2px; }
.mini-eye { width: 16px; height: 12px; }
.name-row b { width: 9px; font: bold 12px/17px "Liberation Sans", sans-serif; }
.picked { flex: 1; height: 17px; background: #0078d7; }
.splitter { height: 6px; margin: 8px 4px 1px 0; border: 1px solid #a0a0a0; border-left: 0; box-shadow: inset 0 1px #fff; }
.edge-tab { position: absolute; left: 0; bottom: 32px; width: 3px; height: 50px; background: linear-gradient(#fff 5px, #0096f0 5px 25px, #fff 25px); }

.field { width: 100%; height: 17px; padding: 0 0 1px 3px; background: #fff; border: 1px solid; border-color: #808080 #fff #fff #808080; box-shadow: inset 1px 1px #696969; line-height: 14px; outline: 0; }
.field:disabled { background: #efefef; color: #808080; }
.field.flat { background: #efefef; box-shadow: none; padding-left: 1px; }
.btn { display: flex; flex: none; align-items: center; justify-content: center; background: #efefef; border: 1px solid; border-color: #fff #696969 #696969 #fff; box-shadow: inset -1px -1px #a0a0a0; white-space: nowrap; }
.btn.pressed { border-color: #696969; box-shadow: inset 1px 1px #fff, inset -2px -2px #a0a0a0; }
.btn:disabled { color: #999; text-shadow: 1px 1px #fff; }
.text-form { padding: 7px 0 0 8px; }
.group { display: flex; width: 188px; height: 80px; padding: 1px 2px; border: 1px solid #a0a0a0; box-shadow: inset 1px 1px #fff, 1px 1px #fff; }
.coords { display: grid; grid-template-columns: 20px 60px 60px; grid-template-rows: 15px 17px 17px 17px; gap: 2px 3px; line-height: 18px; }
.coords label { padding-left: 8px; }
.head-pos { padding-left: 2px; }
.head-size { padding-left: 12px; white-space: nowrap; }
.side { display: flex; flex-direction: column; gap: 1px; margin: 21px 0 0 7px; }
.side .btn { width: 28px; height: 24px; }
.btn.anchor { background: #999; }
.actions { display: flex; gap: 2px; margin: 3px 0 4px 2px; }
.actions .btn { height: 23px; }
.w-array { width: 47px; }
.w-inport { width: 61px; }
.w-apply { width: 75px; }
.font-row { display: flex; align-items: center; height: 18px; padding-left: 10px; }
.font-row label { width: 46px; }
.combo { display: flex; width: 136px; height: 19px; padding: 1px; background: #fff; border: 1px solid; border-color: #808080 #fff #fff #808080; box-shadow: inset 1px 1px #696969; }
.combo select { flex: 1; min-width: 0; padding-left: 2px; appearance: none; border: 0; background: none; line-height: 15px; outline: 0; }
.arrow { display: flex; align-items: center; justify-content: center; width: 16px; background: #efefef; border: 1px solid; border-color: #fff #696969 #696969 #fff; }
.combo.face { width: 180px; margin: 4px 0 2px 10px; }
.style-row { display: flex; gap: 2px; padding-left: 10px; }
.style-row .btn { width: 30px; height: 27px; }
.style-row .keep { margin-left: 31px; }
.italic-f { font: italic bold 18px "Liberation Serif", serif; color: #00f; }
.spacing { display: flex; height: 29px; padding-left: 16px; }
.spacing label { display: flex; align-items: center; gap: 6px; width: 58px; }
.spacing label > svg { width: 30px; height: 28px; overflow: visible; }
.auto { font: 11px "Liberation Sans", sans-serif; fill: #f00; }
input[type="radio"] { appearance: none; width: 12px; height: 12px; border: 1px solid; border-color: #808080 #fff #fff #808080; border-radius: 50%; background: #fff; box-shadow: inset 1px 1px #b0b0b0; }
input[type="radio"]:checked { background: radial-gradient(#000 2px, #fff 3px); }
.pair { display: flex; justify-content: space-between; width: 187px; height: 21px; padding-left: 10px; }
.pair .field { width: 60px; height: 18px; }
.text-label { display: block; padding-left: 10px; margin-bottom: 1px; line-height: 14px; padding-bottom: 2px; }
.memo { display: grid; grid-template: 34px 17px / 1fr 16px; width: 178px; height: 54px; margin-left: 10px; border: 1px solid; border-color: #696969 #fff #fff #696969; box-shadow: inset 1px 1px #a0a0a0; color: #b8b8b8; }
.memo textarea { resize: none; border: 0; padding: 0 4px; margin: 1px 0 0 1px; background: #fff; color: #000; overflow: hidden; outline: 0; line-height: 14px; }
.memo-v { display: flex; flex-direction: column; align-items: center; justify-content: space-around; }
.memo-h { display: flex; align-items: center; justify-content: space-between; padding: 0 4px; }
.check { display: flex; align-items: center; gap: 6px; white-space: nowrap; overflow: hidden; }
.text-form .check { margin: 4px 0 0 10px; }
input[type="checkbox"] { appearance: none; flex: none; width: 12px; height: 12px; background: #fff; border: 1px solid; border-color: #808080 #fff #fff #808080; box-shadow: inset 1px 1px #696969; }
input[type="checkbox"]:checked::before { content: ""; display: block; width: 7px; height: 4px; margin: 2px; border: solid #000; border-width: 0 0 2px 2px; transform: rotate(-45deg); }

.palette-col { flex: none; width: 36px; border-left: 1px solid #a0a0a0; }
.draw-tools { display: flex; flex-direction: column; align-items: center; height: 475px; border-bottom: 1px solid #a0a0a0; padding: 4px 2px 0 0; }
.hgrip { width: 31px; height: 3px; margin-bottom: 2px; border-bottom: 1px solid #a0a0a0; border-top: 1px solid #fff; }

.center { display: flex; flex: 1; flex-direction: column; min-width: 0; }
.subbar { display: flex; align-items: center; height: 33px; padding-bottom: 2px; }
.subbar .grip { margin: 0 4px 0 1px; }
.sq { width: 35px; height: 29px; }
.sq svg { width: 24px; height: 24px; }
.sq.grey { color: #a0a0a0; --body: #a0a0a0; }
.sq.gap { margin-right: 7px; }
.sq.gap2 { margin-right: 16px; }
.sq.tight { margin-right: 2px; }
.sq.gap3 { margin-right: 10px; }
.subbar .wide-eye svg { width: 28px; height: 26px; }
.view { display: grid; flex: 1; grid-template: 20px 1fr 17px / 20px 1fr 18px; margin-right: 4px; background: #fff; border: 1px solid; border-color: #696969 #fff #fff #696969; }
.ruler-h { grid-area: 1 / 2; width: 100%; height: 20px; }
.ruler-v { grid-area: 2 / 1; width: 20px; height: 100%; }
.stage { grid-area: 2 / 2; width: 100%; height: 100%; }
.ruler-label { font: 10px "Liberation Sans", sans-serif; text-anchor: middle; }
.mark-text { font: 37px "Noto Sans CJK JP", sans-serif; font-feature-settings: "hwid"; text-anchor: middle; }
.scroll-v { grid-area: 1 / 3 / 3 / 4; display: flex; flex-direction: column; align-items: center; justify-content: space-between; padding: 3px 0 2px; background: #efefef; }
.scroll-v i { width: 15px; height: 17px; background: #cdcdcd; }
.scroll-h { grid-area: 3 / 1 / 4 / 4; display: flex; align-items: center; justify-content: space-between; padding: 0 19px 0 2px; background: #efefef; }
.scroll-h i { width: 17px; height: 15px; background: #cdcdcd; }

.markbar { display: grid; grid-template-columns: 67px 67px 105px 51px 51px 21px 66px 87px auto; grid-template-rows: 23px 24px; column-gap: 3px; justify-content: start; align-items: start; height: 55px; padding: 7px 0 0 3px; }
.markbar .big { grid-row: 1 / 3; width: 67px; height: 39px; margin-top: 1px; }
.markbar .check { height: 20px; padding-left: 1px; }
.markbar .clip { padding: 1px 5px; }
.clip span { display: block; overflow: hidden; white-space: nowrap; }
.markbar .btn.r { height: 21px; }
.markbar .btn.param { height: 23px; }

.dock-right { flex: none; width: 213px; padding: 1px 0 0 4px; border-left: 1px solid #a0a0a0; }
.dock-right h2 { padding-left: 2px; margin-bottom: 21px; background: #c4d3e2; }
.pens { display: grid; grid-template: 112px 17px / 1fr 16px; width: 188px; margin-left: 4px; background: #efefef; border: 1px solid; border-color: #696969 #fff #fff #696969; box-shadow: inset 1px 1px #a0a0a0; }
.pen-view { overflow: hidden; background: #fff; margin: 1px 0 0 1px; }
.p-no { width: 89px; }
.p-color { width: 45px; }
.pens th { height: 17px; line-height: 15px; padding-left: 5px; background: #efefef; border-right: 1px solid #808080; border-bottom: 1px solid #a0a0a0; }
.pens td { height: 13px; line-height: 12px; padding-left: 5px; border-bottom: 1px solid #f0f0f0; }
.pens td:nth-child(-n+2) { padding-left: 0; }
.pens td div { display: flex; }
.pens td svg { width: 12px; height: 12px; }
.pens td span { flex: 1; padding-left: 4px; }
.pens .sel span { background: #0078d7; color: #fff; }
.pens td i { display: block; width: 43px; height: 11px; margin-left: 1px; border: 1px solid #000; }
.pen-v { display: flex; flex-direction: column; align-items: center; padding: 3px 0; }
.pen-v i { width: 15px; height: 17px; margin: 3px 0 auto; background: #cdcdcd; }
.pen-h { display: flex; align-items: center; padding: 0 4px; }
.pen-h i { width: 119px; height: 15px; margin: 0 auto 0 2px; background: #cdcdcd; }
.swatches { display: flex; gap: 2px; width: 181px; margin: 4px 0 3px 7px; }
.swatches i { flex: 1; height: 18px; }
.k0 { background: #000; }
.k1 { background: #00f; }
.k2 { background: #f00; }
.k3 { background: #0f0; }
.k4 { background: #f0f; }
.k5 { background: #ff0; }
.k6 { background: #ff8080; }
.k7 { background: #800000; }
.params { width: 188px; height: 286px; margin-left: 4px; padding: 4px 2px; border: 1px solid #a0a0a0; box-shadow: inset 1px 1px #fff, 1px 1px #fff; }
.params .check { height: 16px; margin-bottom: 1px; padding-left: 2px; }
.prow { display: flex; gap: 4px; height: 18px; margin-bottom: 3px; }
.prow.split { margin-top: 24px; }
.prow label { width: 106px; line-height: 16px; border: 1px solid; border-color: #a0a0a0 #fff #fff #a0a0a0; }
.spin { display: flex; width: 69px; border: 1px solid; border-color: #808080 #fff #fff #808080; box-shadow: inset 1px 1px #a0a0a0; color: #808080; }
.spin.live { color: #000; }
.spin input { flex: 1; min-width: 0; padding-left: 3px; border: 0; background: none; color: inherit; line-height: 14px; outline: 0; }
.ud { display: flex; flex-direction: column; width: 16px; }
.ud button { flex: 1; background: #efefef; border: 1px solid; border-color: #fff #808080 #696969 #fff; box-shadow: 0 1px #a0a0a0; }
.adv { display: flex; justify-content: flex-end; gap: 7px; margin-top: 29px; padding-right: 1px; }
.adv .btn { height: 22px; width: 82px; }
.adv .btn:first-child { width: 37px; }
.adv svg { width: 30px; height: 12px; }
.pname { display: flex; width: 189px; margin: 4px 0 0 4px; }
.pname .btn { width: 72px; height: 19px; }
.pname .field { height: 18px; min-width: 0; }
.btn.lib { width: 189px; height: 24px; margin-left: 4px; }

.status { height: 22px; padding-left: 5px; border-top: 1px solid #a0a0a0; box-shadow: inset 0 1px #fff; line-height: 24px; }
.taskstrip { display: flex; justify-content: space-between; height: 7px; padding: 0 416px 0 52px; background: #d3d3d3; }
.task-a { width: 342px; background: #fff; }
.task-b { width: 48px; background: #efefef; }
```
